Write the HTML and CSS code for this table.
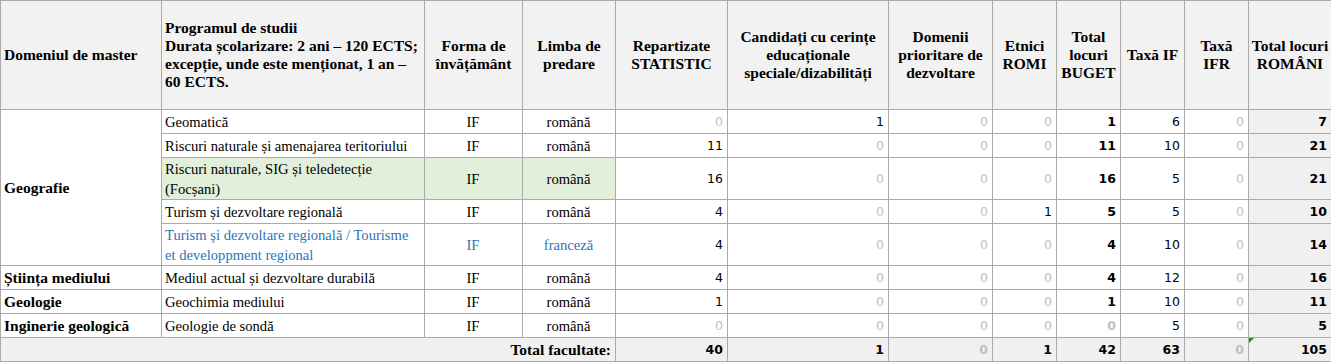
FILE: index.html
```html
<!DOCTYPE html>
<html lang="ro">
<head>
<meta charset="utf-8">
<title>Locuri master</title>
<link rel="stylesheet" href="styles.css">
</head>
<body>
<table class="grid">
  <colgroup>
    <col class="c-dom"><col class="c-prog"><col class="c-forma"><col class="c-limba"><col class="c-rep"><col class="c-cand"><col class="c-domp"><col class="c-n"><col class="c-n"><col class="c-n"><col class="c-n"><col class="c-tot">
  </colgroup>
  <thead>
    <tr class="head">
      <th class="left">Domeniul de master</th>
      <th class="left">Programul de studii<br>Durata școlarizare: 2 ani – 120 ECTS; excepție, unde este menționat, 1 an – 60 ECTS.</th>
      <th>Forma de învățământ</th>
      <th>Limba de predare</th>
      <th>Repartizate STATISTIC</th>
      <th>Candidați cu cerințe educaționale speciale/dizabilități</th>
      <th>Domenii prioritare de dezvoltare</th>
      <th>Etnici ROMI</th>
      <th>Total locuri BUGET</th>
      <th>Taxă IF</th>
      <th>Taxă IFR</th>
      <th class="tight">Total locuri<br>ROMÂNI</th>
    </tr>
  </thead>
  <tbody>
    <tr class="r1">
      <td class="dom" rowspan="5">Geografie</td>
      <td class="prog">Geomatică</td>
      <td class="ctr">IF</td><td class="ctr">română</td>
      <td class="num z">0</td><td class="num">1</td><td class="num z">0</td><td class="num z">0</td>
      <td class="num b">1</td><td class="num">6</td><td class="num z">0</td><td class="num b tot">7</td>
    </tr>
    <tr class="r1">
      <td class="prog">Riscuri naturale și amenajarea teritoriului</td>
      <td class="ctr">IF</td><td class="ctr">română</td>
      <td class="num">11</td><td class="num z">0</td><td class="num z">0</td><td class="num z">0</td>
      <td class="num b">11</td><td class="num">10</td><td class="num z">0</td><td class="num b tot">21</td>
    </tr>
    <tr class="r2">
      <td class="prog green">Riscuri naturale, SIG și teledetecție (Focșani)</td>
      <td class="ctr green">IF</td><td class="ctr green">română</td>
      <td class="num">16</td><td class="num z">0</td><td class="num z">0</td><td class="num z">0</td>
      <td class="num b">16</td><td class="num">5</td><td class="num z">0</td><td class="num b tot">21</td>
    </tr>
    <tr class="r1">
      <td class="prog">Turism și dezvoltare regională</td>
      <td class="ctr">IF</td><td class="ctr">română</td>
      <td class="num">4</td><td class="num z">0</td><td class="num z">0</td><td class="num">1</td>
      <td class="num b">5</td><td class="num">5</td><td class="num z">0</td><td class="num b tot">10</td>
    </tr>
    <tr class="r2">
      <td class="prog blue">Turism şi dezvoltare regională / Tourisme et developpment regional</td>
      <td class="ctr blue">IF</td><td class="ctr blue">franceză</td>
      <td class="num">4</td><td class="num z">0</td><td class="num z">0</td><td class="num z">0</td>
      <td class="num b">4</td><td class="num">10</td><td class="num z">0</td><td class="num b tot">14</td>
    </tr>
    <tr class="r1">
      <td class="dom">Știința mediului</td>
      <td class="prog">Mediul actual și dezvoltare durabilă</td>
      <td class="ctr">IF</td><td class="ctr">română</td>
      <td class="num">4</td><td class="num z">0</td><td class="num z">0</td><td class="num z">0</td>
      <td class="num b">4</td><td class="num">12</td><td class="num z">0</td><td class="num b tot">16</td>
    </tr>
    <tr class="r1">
      <td class="dom">Geologie</td>
      <td class="prog">Geochimia mediului</td>
      <td class="ctr">IF</td><td class="ctr">română</td>
      <td class="num">1</td><td class="num z">0</td><td class="num z">0</td><td class="num z">0</td>
      <td class="num b">1</td><td class="num">10</td><td class="num z">0</td><td class="num b tot">11</td>
    </tr>
    <tr class="r1">
      <td class="dom">Inginerie geologică</td>
      <td class="prog">Geologie de sondă</td>
      <td class="ctr">IF</td><td class="ctr">română</td>
      <td class="num z">0</td><td class="num z">0</td><td class="num z">0</td><td class="num z">0</td>
      <td class="num b z">0</td><td class="num">5</td><td class="num z">0</td><td class="num b tot">5</td>
    </tr>
  </tbody>
  <tfoot>
    <tr class="r1 foot">
      <td class="label" colspan="4">Total facultate:</td>
      <td class="num b">40</td><td class="num b">1</td><td class="num b z">0</td><td class="num b">1</td>
      <td class="num b">42</td><td class="num b">63</td><td class="num b z">0</td><td class="num b flag">105</td>
    </tr>
  </tfoot>
</table>
</body>
</html>
```
FILE: styles.css
```css
html, body {
  margin: 0;
  padding: 0;
  background: #ffffff;
}

.grid {
  border-collapse: collapse;
  table-layout: fixed;
  width: 1331px;
  font-family: "Liberation Serif", "Times New Roman", serif;
  font-size: 14.6px;
  color: #000000;
}

.c-dom { width: 161px; }
.c-prog { width: 263px; }
.c-forma { width: 98px; }
.c-limba { width: 93px; }
.c-rep { width: 112px; }
.c-cand { width: 161px; }
.c-domp { width: 104px; }
.c-n { width: 64px; }
.c-tot { width: 83px; }

.grid th,
.grid td {
  border: 1px solid #ababab;
  padding: 0 4px 0 3px;
  overflow: hidden;
}

.head {
  height: 109px;
}

.head th {
  background: #f2f2f2;
  font-weight: bold;
  font-size: 15.5px;
  line-height: 18px;
  text-align: center;
  vertical-align: middle;
  padding: 0 3px;
}

.head th.left {
  text-align: left;
}

.head th.tight {
  padding: 0;
  white-space: nowrap;
}

.r1 { height: 24px; }
.r2 { height: 42px; }

.grid td {
  line-height: 20px;
  vertical-align: middle;
}

.dom {
  font-weight: bold;
  font-size: 15.5px;
}

.ctr {
  text-align: center;
}

.num {
  text-align: right;
  font-family: "DejaVu Sans", Verdana, sans-serif;
  font-size: 12.5px;
  padding-right: 4px;
}

.num.b {
  font-weight: bold;
}

.num.z {
  color: #bfbfbf;
}

.num.tot {
  background: #f0f0f0;
}

.green {
  background: #e2efda;
}

.blue {
  color: #2e75b6;
}

.foot td {
  background: #f0f0f0;
}

.foot .label {
  text-align: right;
  font-weight: bold;
  font-size: 15.5px;
  padding-right: 4px;
}

.flag {
  position: relative;
}

.flag::before {
  content: "";
  position: absolute;
  left: 0;
  top: 0;
  border-top: 5px solid #1e8a28;
  border-right: 5px solid transparent;
}
```
